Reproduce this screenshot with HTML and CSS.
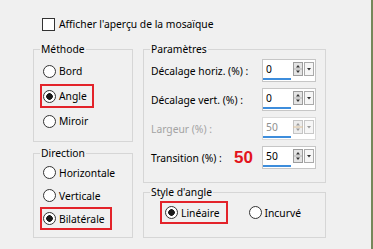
FILE: index.html
```html
<!DOCTYPE html>
<html lang="fr">
<head>
    <meta charset="UTF-8">
    <meta name="viewport" content="width=device-width, initial-scale=1.0">
    <title>Mosaïque - Paramètres</title>
    <link rel="stylesheet" href="styles.css">
</head>
<body>

<div class="dialog">

    <label class="check-row"><input type="checkbox"><span>Afficher l'aperçu de la mosaïque</span></label>

    <div class="columns">

        <!-- left column: Méthode + Direction -->
        <div class="col-left">
            <fieldset class="group methode">
                <legend>Méthode</legend>
                <label class="option"><input type="radio" name="methode"><span>Bord</span></label>
                <label class="option marked"><input type="radio" name="methode" checked><span>Angle</span></label>
                <label class="option"><input type="radio" name="methode"><span>Miroir</span></label>
            </fieldset>

            <fieldset class="group direction">
                <legend>Direction</legend>
                <label class="option"><input type="radio" name="direction"><span>Horizontale</span></label>
                <label class="option"><input type="radio" name="direction"><span>Verticale</span></label>
                <label class="option marked"><input type="radio" name="direction" checked><span>Bilatérale</span></label>
            </fieldset>
        </div>

        <!-- right column: Paramètres + Style d'angle -->
        <div class="col-right">
            <fieldset class="group params">
                <legend>Paramètres</legend>

                <div class="field">
                    <span class="field-label">Décalage horiz. (%) :</span>
                    <span class="spin">
                        <input type="text" value="0">
                        <svg width="21" height="14" viewBox="0 0 21 14">
                            <rect x="0.5" y="0.5" width="9" height="13" fill="#e4e4e4" stroke="#9c9c9c"/>
                            <line x1="1" y1="7" x2="9" y2="7" stroke="#b4b4b4"/>
                            <path d="M3 5.5h4L5 3z M3 8.5h4L5 11z" fill="#333"/>
                            <rect x="11.5" y="0.5" width="9" height="13" fill="#f6f6f6" stroke="#aaa"/>
                            <path d="M14 6h4l-2 2.5z" fill="#333"/>
                        </svg>
                    </span>
                </div>

                <div class="field">
                    <span class="field-label">Décalage vert. (%) :</span>
                    <span class="spin">
                        <input type="text" value="0">
                        <svg width="21" height="14" viewBox="0 0 21 14">
                            <rect x="0.5" y="0.5" width="9" height="13" fill="#e4e4e4" stroke="#9c9c9c"/>
                            <line x1="1" y1="7" x2="9" y2="7" stroke="#b4b4b4"/>
                            <path d="M3 5.5h4L5 3z M3 8.5h4L5 11z" fill="#333"/>
                            <rect x="11.5" y="0.5" width="9" height="13" fill="#f6f6f6" stroke="#aaa"/>
                            <path d="M14 6h4l-2 2.5z" fill="#333"/>
                        </svg>
                    </span>
                </div>

                <div class="field disabled">
                    <span class="field-label">Largeur (%) :</span>
                    <span class="spin">
                        <input type="text" value="50" disabled>
                        <svg width="21" height="14" viewBox="0 0 21 14">
                            <rect x="0.5" y="0.5" width="9" height="13" fill="#ededed" stroke="#c4c4c4"/>
                            <line x1="0" y1="7" x2="10" y2="7" stroke="#dcc29c"/>
                            <path d="M3 5.5h4L5 3z M3 8.5h4L5 11z" fill="#9a9a9a"/>
                            <rect x="11.5" y="0.5" width="9" height="13" fill="#f6f6f6" stroke="#c8c8c8"/>
                            <path d="M14 6h4l-2 2.5z" fill="#9a9a9a"/>
                        </svg>
                    </span>
                </div>

                <div class="field">
                    <span class="field-label">Transition (%) : <b class="note">50</b></span>
                    <span class="spin">
                        <input type="text" value="50">
                        <svg width="21" height="14" viewBox="0 0 21 14">
                            <rect x="0.5" y="0.5" width="9" height="13" fill="#e4e4e4" stroke="#9c9c9c"/>
                            <line x1="1" y1="7" x2="9" y2="7" stroke="#b4b4b4"/>
                            <path d="M3 5.5h4L5 3z M3 8.5h4L5 11z" fill="#333"/>
                            <rect x="11.5" y="0.5" width="9" height="13" fill="#f6f6f6" stroke="#aaa"/>
                            <path d="M14 6h4l-2 2.5z" fill="#333"/>
                        </svg>
                    </span>
                </div>
            </fieldset>

            <fieldset class="group angle-style">
                <legend>Style d'angle</legend>
                <div class="options-row">
                    <label class="option marked"><input type="radio" name="style" checked><span>Linéaire</span></label>
                    <label class="option"><input type="radio" name="style"><span>Incurvé</span></label>
                </div>
            </fieldset>
        </div>

    </div>
</div>

</body>
</html>
```

FILE: styles.css
```css
* {
    box-sizing: border-box;
}

body {
    margin: 0;
    background-color: #f0f0f0;
    font-family: "Noto Sans", "Liberation Sans", sans-serif;
    font-size: 10.3px;
    color: #000;
}

/* --- Dialog frame --- */
.dialog {
    width: 373px;
    height: 249px;
    padding: 16px 0 0 33px;
    border-right: 2px solid #76875a;
}

.check-row {
    display: flex;
    align-items: center;
    gap: 4px;
    height: 16px;
    margin-left: 9px;
}

.check-row input {
    appearance: none;
    width: 13px;
    height: 13px;
    margin: 0;
    border: 1px solid #333;
    background-color: #fff;
}

.columns {
    display: flex;
    gap: 10px;
    margin-top: 10px;
}

.col-left {
    width: 100px;
    display: flex;
    flex-direction: column;
    gap: 4px;
}

.col-right {
    width: 183px;
    display: flex;
    flex-direction: column;
    gap: 2px;
}

/* --- Group boxes --- */
.group {
    margin: 0;
    min-width: 0;
    padding: 3px 6px 0;
    border: 1px solid #d6d6d6;
}

.group legend {
    padding: 0 1px;
    line-height: 14px;
}

.methode { height: 100px; }
.direction { height: 92px; padding-top: 1px; }
.params { height: 141px; padding-right: 9px; }
.angle-style { height: 53px; padding-top: 2px; }

/* --- Radio options --- */
.option {
    display: flex;
    align-items: center;
    gap: 3px;
    width: fit-content;
    height: 24px;
    padding: 0 5px 0 1px;
    border: 2px solid transparent;
}

.option.marked {
    border-color: #e3232a;
}

.methode .option + .option {
    margin-top: 1px;
}

.direction .option {
    height: 23px;
}

.option input {
    appearance: none;
    width: 13px;
    height: 13px;
    margin: 0;
    border: 1px solid #333;
    border-radius: 50%;
    background-color: #fff;
}

.option input:checked {
    background: radial-gradient(circle, #1a1a1a 0 3px, #fff 3.6px);
}

.options-row {
    display: flex;
    gap: 16px;
    margin-left: 10px;
}

.angle-style .option {
    height: 23px;
    padding-left: 3px;
    padding-right: 6px;
}

/* --- Spin fields --- */
.field {
    display: grid;
    grid-template-columns: 1fr 54px;
    align-items: center;
    height: 23px;
    padding-left: 1px;
}

.field + .field {
    margin-top: 6px;
}

.field-label {
    display: flex;
    align-items: center;
    justify-content: space-between;
    padding-right: 9px;
}

.note {
    font-family: "Liberation Sans", Arial, sans-serif;
    font-size: 17px;
    font-weight: bold;
    color: #e3141c;
}

.spin {
    display: flex;
    align-items: flex-start;
    height: 23px;
    border: 1px solid #c6c6c6;
    background-color: #fff;
}

.spin input {
    width: 28px;
    height: 20px;
    margin: 0;
    padding: 0 0 0 3px;
    border: 0;
    border-bottom: 2px solid #3d8ddc;
    background-color: #fff;
    font: inherit;
    color: #000;
    outline: none;
}

.spin svg {
    display: block;
    margin: 2px 0 0 2px;
}

.disabled .field-label {
    color: #a3a3a3;
}

.disabled .spin {
    border-color: #dadada;
}

.disabled .spin input {
    color: #8f8f8f;
}
```
